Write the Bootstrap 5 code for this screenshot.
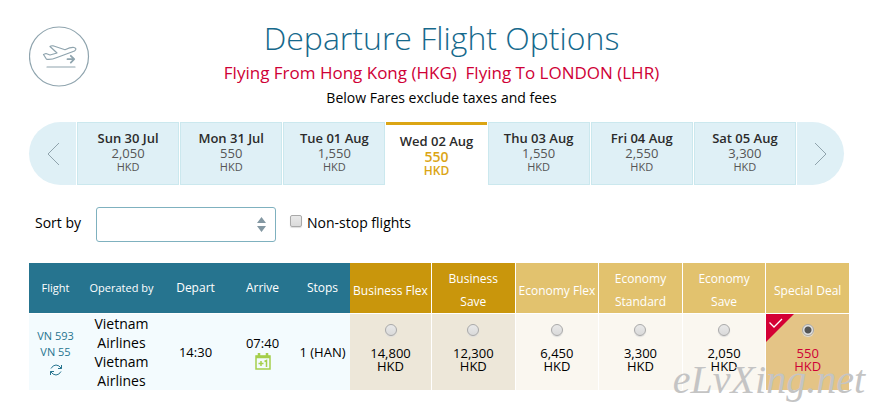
<!DOCTYPE html>
<html lang="en">
<head>
<meta charset="utf-8">
<meta name="viewport" content="width=device-width, initial-scale=1">
<title>Departure Flight Options</title>
<link href="https://cdn.jsdelivr.net/npm/bootstrap@5.3.0/dist/css/bootstrap.min.css" rel="stylesheet">
<style>
body{font-family:"Open Sans","Noto Sans",sans-serif;font-size:14px;line-height:20px;color:#000;background:#fff}
.page{padding:18px 28px 18px 29px}
.masthead{padding-left:5px}
.plane{left:0;top:8px;width:61px;height:61px}
.title{font-size:32px;line-height:40px;font-weight:300;color:#16698c}
.route{font-size:17px;line-height:24px;margin-top:3px;color:#cf0036}
.note{margin-top:3px}
.dates{height:63px;gap:1px;margin:14px 5px 0 0}
.arrow{width:47px;border:0;background:#dff0f6;color:#8fa3ac}
.arrow.prev{border-radius:32px 0 0 32px}
.arrow.next{border-radius:0 32px 32px 0}
.day{flex:1 1 0;border:1px solid #cbe8ee;background:#dff0f6;padding:8px 0 0;color:#555;font-size:13px;line-height:15px}
.day b{font-weight:600;color:#2b2b2b}
.day small{font-size:11px;line-height:11px}
.day.on{border:0;border-top:3px solid #dba514;background:#fff;color:#dba514;font-weight:600;padding-top:9px}
.day.on span{font-size:14px;line-height:16px}
.day.on small{font-size:12px;line-height:12px}
.sortbar{margin-top:22px;padding-left:6px}
.sortbox{width:180px;height:35px;margin-left:15px;border:1px solid #7fb1bf;border-radius:3px;background:#fff;appearance:none}
.spin{right:10px;top:10px}
.pick{appearance:none;margin:0;width:12px;height:12px;border:1px solid #a9a9a9;background:linear-gradient(#e9e9e9,#dadada);box-shadow:0 1px 1px #ddd;flex:none}
.pick[type=checkbox]{border-radius:2px}
.pick[type=radio]{border-radius:50%;display:block;margin:0 auto 11px}
.pick[type=radio]:checked{background:radial-gradient(circle,#555 0 3px,#e2e2e2 4px)}
.nonstop{margin:0 5px 8px 14px}
.fares{table-layout:fixed;width:100%;margin-top:21px;border-collapse:separate;border-spacing:0}
.fares th,.fares td{text-align:center;padding:0}
.fares th{height:50px;font-weight:400;font-size:12px;line-height:20px;color:#fff;background:#26748f}
.fares th.tight{font-size:11px}
.fares th.fare{padding-top:4px;line-height:23px;white-space:nowrap;background:#e2c26e}
.fares th.biz{background:#c9960c}
.fares td{height:77px;border-top:1px solid #fff;background:#f3fbfe;line-height:19px;font-size:13px}
.fares .fare+.fare{border-left:1px solid #fff}
.fares td.fare{vertical-align:top;padding-top:10px;background:#faf7f0;line-height:13px}
.fares td.biz{background:#ede7d9}
.fares td.deal{background:#e4c486;color:#cf0036}
.fares td.carrier{font-size:14px}
.fares a{color:#26748f;text-decoration:none;font-size:11px;line-height:16px}
.c-flight{width:53px}.c-carrier{width:79px}.c-depart{width:69px}.c-arrive{width:65px}.c-stops{width:55px}.c-flex{width:81px}
.corner{left:0;top:0}
.watermark{right:12px;bottom:8px;font:italic 40px/40px "Liberation Serif",serif;color:#c4c4c4;pointer-events:none}
svg{display:block}
</style>
<script src="https://cdn.jsdelivr.net/npm/bootstrap@5.3.0/dist/js/bootstrap.bundle.min.js"></script>
</head>
<body>
<main class="page position-relative">
<header class="masthead text-center position-relative">
<svg class="plane position-absolute" viewBox="0 0 61 61" fill="none" stroke="#8fa4ae" stroke-width="1.2" stroke-linecap="round" stroke-linejoin="round"><circle cx="30" cy="30.500" r="29.500"/><path d="M14.500 28.500 L17 27.500 L21 29 L28 27 L21 20.500 Q22 19.500 24 19.800 L36 23.700 Q42 21 45 21.500 Q48.500 22.500 45.500 25 L28 31.500 Q22 34 17.500 33.200 Z M18 41 H46"/><path stroke-width="1.800" d="M38.500 33.200 H44.500 M41.800 29.800 L45.200 33.200 L41.800 36.600"/></svg>
<h1 class="title mb-0">Departure Flight Options</h1>
<div class="route">Flying From Hong Kong (HKG)&nbsp; Flying To LONDON (LHR)</div>
<div class="note">Below Fares exclude taxes and fees</div>
</header>
<nav class="dates d-flex" aria-label="Departure date">
<button class="arrow prev p-0" type="button" aria-label="Earlier dates"><svg class="mx-auto" width="14" height="24" viewBox="0 0 14 24" fill="none" stroke="currentColor"><path d="M13 1 2 12 13 23"/></svg></button>
<button class="day d-flex flex-column align-items-center" type="button"><b>Sun 30 Jul</b><span>2,050</span><small>HKD</small></button>
<button class="day d-flex flex-column align-items-center" type="button"><b>Mon 31 Jul</b><span>550</span><small>HKD</small></button>
<button class="day d-flex flex-column align-items-center" type="button"><b>Tue 01 Aug</b><span>1,550</span><small>HKD</small></button>
<button class="day on d-flex flex-column align-items-center" type="button" aria-current="date"><b>Wed 02 Aug</b><span>550</span><small>HKD</small></button>
<button class="day d-flex flex-column align-items-center" type="button"><b>Thu 03 Aug</b><span>1,550</span><small>HKD</small></button>
<button class="day d-flex flex-column align-items-center" type="button"><b>Fri 04 Aug</b><span>2,550</span><small>HKD</small></button>
<button class="day d-flex flex-column align-items-center" type="button"><b>Sat 05 Aug</b><span>3,300</span><small>HKD</small></button>
<button class="arrow next p-0" type="button" aria-label="Later dates"><svg class="mx-auto" width="14" height="24" viewBox="0 0 14 24" fill="none" stroke="currentColor"><path d="M2 1 13 12 2 23"/></svg></button>
</nav>
<form class="sortbar d-flex align-items-center">
<label for="sort" class="pb-1">Sort by</label>
<div class="position-relative"><select id="sort" class="sortbox d-block"><option></option></select>
<svg class="spin position-absolute pe-none" width="9" height="15" viewBox="0 0 9 15" fill="#8397a2"><path d="M0 6 4.500 0 9 6ZM0 9H9L4.500 15Z"/></svg></div>
<input class="pick nonstop" type="checkbox" id="nonstop"><label for="nonstop" class="pb-1">Non-stop flights</label>
</form>
<table class="fares">
<colgroup><col class="c-flight"><col class="c-carrier"><col class="c-depart"><col class="c-arrive"><col class="c-stops"><col class="c-flex"><col span="5"></colgroup>
<thead><tr><th class="tight">Flight</th><th class="tight">Operated by</th><th>Depart</th><th>Arrive</th><th>Stops</th><th class="fare biz">Business Flex</th><th class="fare biz">Business<br>Save</th><th class="fare">Economy Flex</th><th class="fare">Economy<br>Standard</th><th class="fare">Economy<br>Save</th><th class="fare">Special Deal</th></tr></thead>
<tbody><tr>
<td><a class="d-block" href="#vn593">VN 593</a><a class="d-block" href="#vn55">VN 55</a>
<svg class="mx-auto mt-1" width="14" height="12" viewBox="0 0 14 12" fill="none" stroke="#26748f"><path d="M2 4.500Q4 1 7 1T12.500 4.500M12.500 1V4.500H9M12 7.500Q10 11 7 11T1.500 7.500M1.500 11V7.500H5"/></svg></td>
<td class="carrier">Vietnam<br>Airlines<br>Vietnam<br>Airlines</td>
<td>14:30</td>
<td>07:40<svg class="mx-auto" width="16" height="17" viewBox="0 0 16 17" fill="none" stroke="#a5cf4c" stroke-width="1.500"><path d="M1 3H15V16H1Z"/><path stroke-width="2.500" d="M1 4H15M4 0V5M12 0V5"/><path d="M3.500 10.500H8.500M6 8V13M9.500 8.500 11.500 7.500V14"/></svg></td>
<td>1 (HAN)</td>
<td class="fare biz"><input class="pick" type="radio" name="fare" aria-label="Business Flex">14,800<br>HKD</td>
<td class="fare biz"><input class="pick" type="radio" name="fare" aria-label="Business Save">12,300<br>HKD</td>
<td class="fare"><input class="pick" type="radio" name="fare" aria-label="Economy Flex">6,450<br>HKD</td>
<td class="fare"><input class="pick" type="radio" name="fare" aria-label="Economy Standard">3,300<br>HKD</td>
<td class="fare"><input class="pick" type="radio" name="fare" aria-label="Economy Save">2,050<br>HKD</td>
<td class="fare deal position-relative"><svg class="corner position-absolute" width="28" height="28" viewBox="0 0 28 28"><path fill="#d40035" d="M0 0H28L0 28Z"/><path fill="none" stroke="#fff" stroke-width="1.300" d="M3.500 8.500 8 13 16 5"/></svg><input class="pick" type="radio" name="fare" aria-label="Special Deal" checked>550<br>HKD</td>
</tr></tbody>
</table>
<div class="watermark position-absolute">eLvXing.net</div>
</main>
</body>
</html>
